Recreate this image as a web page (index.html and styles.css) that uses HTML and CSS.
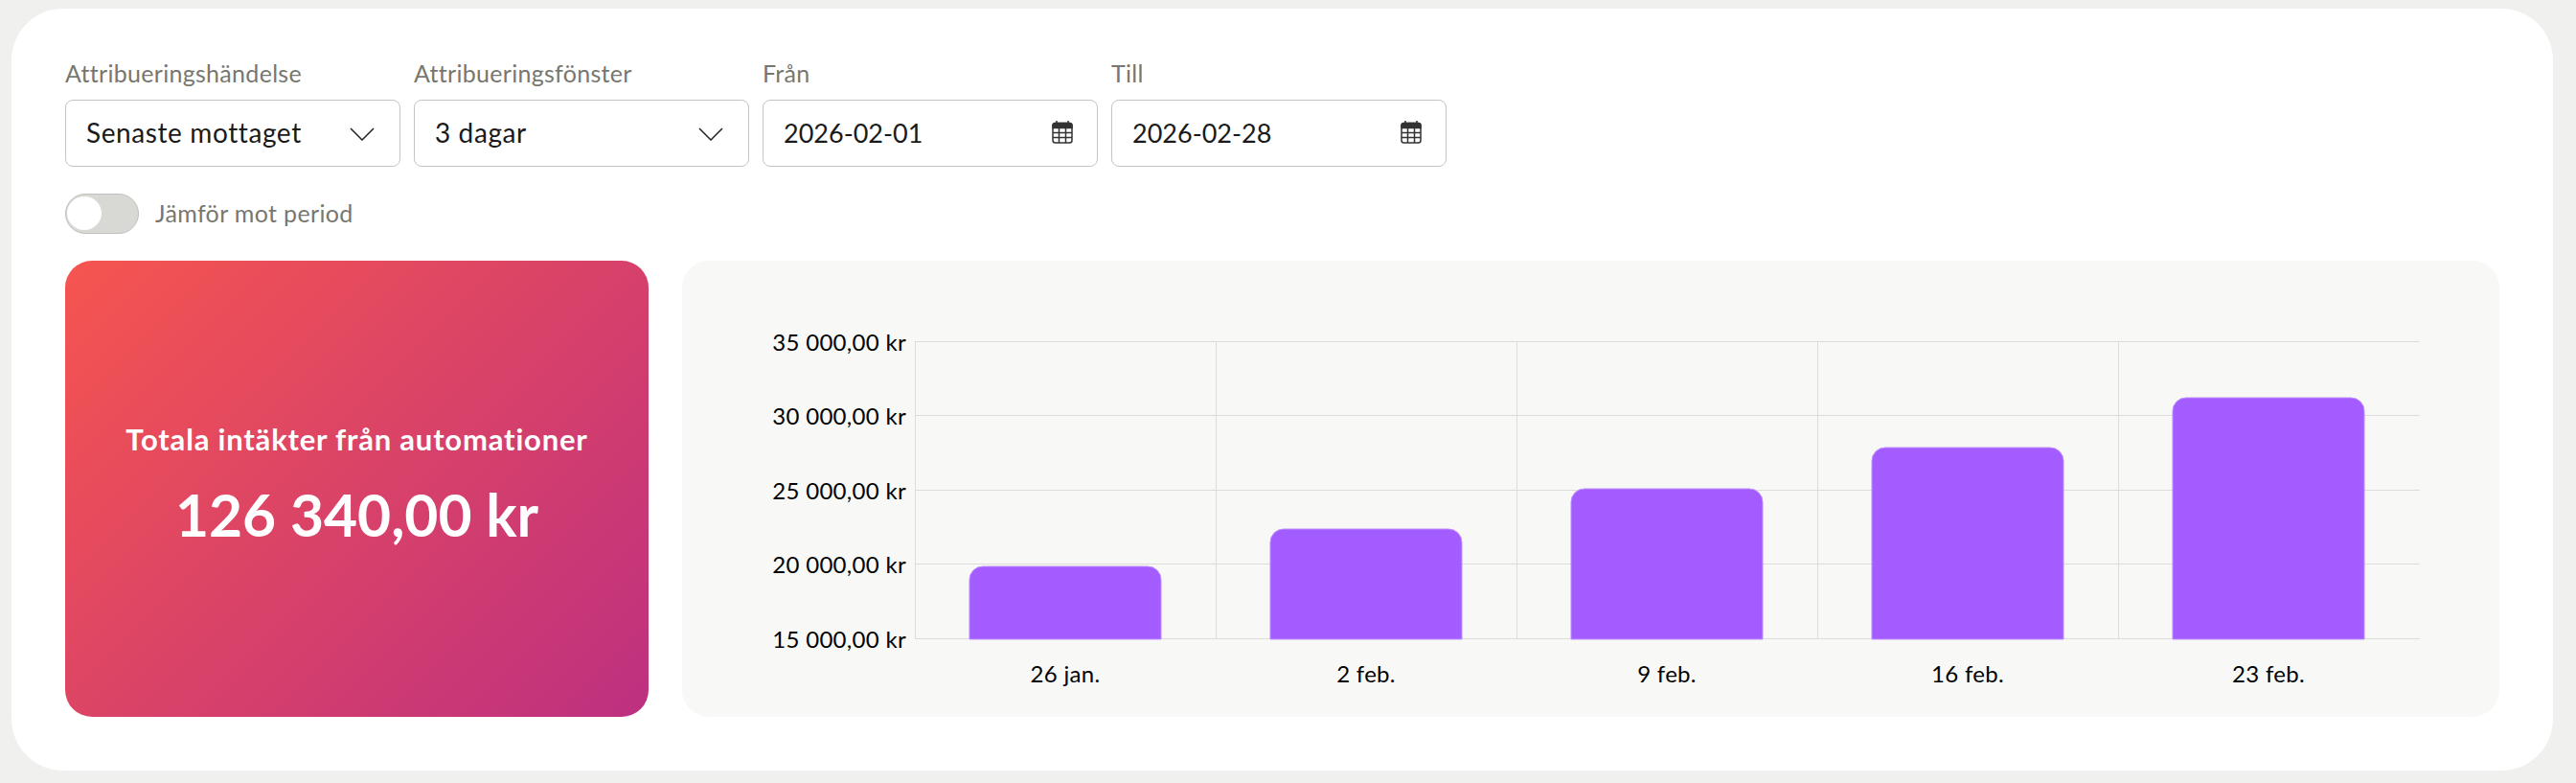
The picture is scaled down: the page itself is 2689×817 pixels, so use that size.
FILE: index.html
```html
<!DOCTYPE html>
<html lang="sv">
<head>
    <title>Intäkter från automationer</title>
    <link rel="stylesheet" href="styles.css">
</head>
<body>
    <main class="panel">
        <div class="filters">
            <div class="field">
                <span class="field_label">Attribueringshändelse</span>
                <div class="field_box">
                    <span class="field_text">Senaste mottaget</span>
                    <svg class="chevron" viewBox="0 0 26 14"><path d="M1 1l12 12L25 1"/></svg>
                </div>
            </div>
            <div class="field">
                <span class="field_label">Attribueringsfönster</span>
                <div class="field_box">
                    <span class="field_text">3 dagar</span>
                    <svg class="chevron" viewBox="0 0 26 14"><path d="M1 1l12 12L25 1"/></svg>
                </div>
            </div>
            <div class="field">
                <span class="field_label">Från</span>
                <div class="field_box">
                    <span class="field_date">2026-02-01</span>
                    <svg class="calendar" viewBox="0 0 22 24"><path d="M5 0v3M17 0v3"/><rect x="1" y="2.5" width="20" height="20.5" rx="2.5"/><path class="calendar_head" d="M1 7.5V5a2.5 2.5 0 0 1 2.5-2.5h15A2.5 2.5 0 0 1 21 5v2.5z"/><path d="M1 12.5h20M1 17.500h20M7.500 7v16M14.500 7v16"/></svg>
                </div>
            </div>
            <div class="field">
                <span class="field_label">Till</span>
                <div class="field_box">
                    <span class="field_date">2026-02-28</span>
                    <svg class="calendar" viewBox="0 0 22 24"><path d="M5 0v3M17 0v3"/><rect x="1" y="2.5" width="20" height="20.5" rx="2.5"/><path class="calendar_head" d="M1 7.5V5a2.5 2.5 0 0 1 2.5-2.5h15A2.5 2.5 0 0 1 21 5v2.5z"/><path d="M1 12.5h20M1 17.500h20M7.500 7v16M14.500 7v16"/></svg>
                </div>
            </div>
        </div>

        <div class="compare">
            <span class="toggle"><span class="toggle_knob"></span></span>
            <span class="compare_label">Jämför mot period</span>
        </div>

        <div class="content">
            <section class="total">
                <p class="total_title">Totala intäkter från automationer</p>
                <p class="total_value">126 340,00 kr</p>
            </section>
            <section class="chart">
                <svg class="chart_svg" viewBox="0 0 1896 476" width="1896" height="476">
                    <g class="grid">
                        <path d="M242 84.500H1813M242 161.500H1813M242 239.500H1813M242 316.500H1813M242 394.500H1813"/>
                        <path d="M242.500 84V394M556.500 84V394M870.500 84V394M1184.500 84V394M1498.500 84V394"/>
                    </g>
                    <g class="bars">
                        <path d="M299 395V333a14 14 0 0 1 14-14H485a14 14 0 0 1 14 14V395z"/>
                        <path d="M613 395V294a14 14 0 0 1 14-14H799a14 14 0 0 1 14 14V395z"/>
                        <path d="M927 395V252a14 14 0 0 1 14-14H1113a14 14 0 0 1 14 14V395z"/>
                        <path d="M1241 395V209a14 14 0 0 1 14-14H1427a14 14 0 0 1 14 14V395z"/>
                        <path d="M1555 395V157a14 14 0 0 1 14-14H1741a14 14 0 0 1 14 14V395z"/>
                    </g>
                    <g class="axis_y">
                        <text x="233" y="84">35 000,00 kr</text>
                        <text x="233" y="161">30 000,00 kr</text>
                        <text x="233" y="239">25 000,00 kr</text>
                        <text x="233" y="316">20 000,00 kr</text>
                        <text x="233" y="394">15 000,00 kr</text>
                    </g>
                    <g class="axis_x">
                        <text x="399" y="430">26 jan.</text>
                        <text x="713" y="430">2 feb.</text>
                        <text x="1027" y="430">9 feb.</text>
                        <text x="1341" y="430">16 feb.</text>
                        <text x="1655" y="430">23 feb.</text>
                    </g>
                </svg>
            </section>
        </div>
    </main>
</body>
</html>
```

FILE: styles.css
```css
* {
    box-sizing: border-box;
}
body {
    margin: 0;
    height: 817px;
    padding: 9px 24px 13px 12px;
    background-color: #f0f0ee;
    font-family: "Lato", "Noto Sans", sans-serif;
    overflow: hidden;
}
.panel {
    height: 795px;
    padding: 55px 56px 56px 56px;
    background-color: #ffffff;
    border-radius: 54px;
}

/* filters */
.filters {
    display: flex;
    gap: 14px;
}
.field {
    width: 350px;
}
.field_label {
    display: block;
    height: 40px;
    font-size: 25px;
    line-height: 25px;
    letter-spacing: 0.3px;
    color: #77776f;
}
.field_box {
    display: flex;
    align-items: center;
    justify-content: space-between;
    height: 70px;
    padding: 0 26px 2px 21px;
    border: 1.5px solid #c4c4c4;
    border-radius: 8px;
    color: #1a1a1a;
}
.field_text {
    font-size: 28px;
    letter-spacing: 0.6px;
}
.field_date {
    font-size: 27px;
}
.chevron {
    width: 26px;
    height: 14px;
    margin-top: 4px;
    fill: none;
    stroke: #222222;
    stroke-width: 1.5;
}
.calendar {
    width: 22px;
    height: 24px;
    margin-right: -1px;
    fill: none;
    stroke: #333333;
    stroke-width: 1.5;
}
.calendar_head {
    fill: #333333;
}

/* toggle */
.compare {
    display: flex;
    align-items: center;
    gap: 17px;
    margin-top: 28px;
    height: 42px;
}
.toggle {
    display: block;
    width: 77px;
    height: 42px;
    padding: 2px 1px;
    background-color: #d8d9d5;
    border: 1.5px solid #c0c1bc;
    border-radius: 21px;
}
.toggle_knob {
    display: block;
    width: 36px;
    height: 35px;
    background-color: #ffffff;
    border-radius: 50%;
}
.compare_label {
    margin-bottom: 3px;
    font-size: 25px;
    letter-spacing: 0.35px;
    color: #77776f;
}

/* content row */
.content {
    display: flex;
    gap: 35px;
    margin-top: 28px;
    height: 476px;
}
.total {
    display: flex;
    flex-direction: column;
    align-items: center;
    justify-content: center;
    flex: 0 0 609px;
    padding-bottom: 12px;
    border-radius: 28px;
    background: linear-gradient(135deg, #f6554f 0%, #bd3080 100%);
    color: #ffffff;
}
.total_title {
    margin: 0 0 30px;
    font-size: 31px;
    line-height: 36px;
    font-weight: 700;
    letter-spacing: 0.8px;
}
.total_value {
    margin: 0;
    font-size: 60.500px;
    line-height: 62px;
    font-weight: 700;
}
.chart {
    flex: 1;
    min-width: 0;
    border-radius: 28px;
    background-color: #f8f8f6;
    overflow: hidden;
}
.chart_svg {
    display: block;
    margin-left: 1px;
}
.grid path {
    fill: none;
    stroke: #dcdcda;
    stroke-width: 1;
}
.bars path {
    fill: #a35cff;
    stroke: #bf8eff;
    stroke-width: 1;
}
.axis_y text,
.axis_x text {
    font-size: 24px;
    letter-spacing: 0.3px;
    fill: #000000;
    dominant-baseline: central;
}
.axis_y text {
    text-anchor: end;
}
.axis_x text {
    text-anchor: middle;
}
```
